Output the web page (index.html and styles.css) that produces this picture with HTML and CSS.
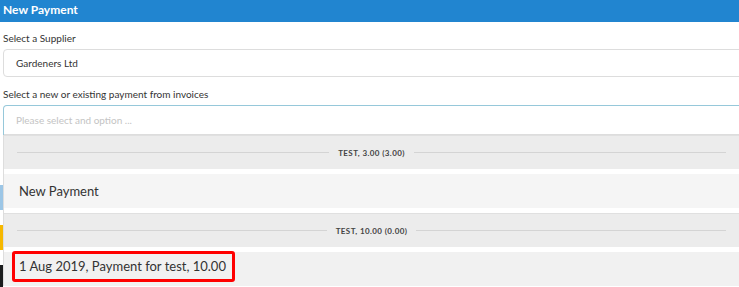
FILE: index.html
```html
<!DOCTYPE html>
<html lang="en">
<head>
  <meta charset="UTF-8" />
  <meta name="viewport" content="width=device-width, initial-scale=1.0" />
  <title>New Payment</title>
  <link rel="stylesheet" href="styles.css">
</head>
<body>
  <header class="modal-header">New Payment</header>

  <div class="content">
    <div class="strip">
      <span class="strip-blue"></span>
      <span class="strip-yellow"></span>
      <span class="strip-dark"></span>
    </div>

    <section class="form">
      <label class="field-label">Select a Supplier</label>
      <div class="input">Gardeners Ltd</div>

      <label class="field-label">Select a new or existing payment from invoices</label>
      <div class="dropdown">
        <div class="search">Please select and option ...</div>
        <div class="menu">
          <div class="divider"><span>TEST, 3.00 (3.00)</span></div>
          <div class="item">New Payment</div>
          <div class="divider"><span>TEST, 10.00 (0.00)</span></div>
          <div class="item item-active"><span class="highlight">1 Aug 2019, Payment for test, 10.00</span></div>
        </div>
      </div>
    </section>
  </div>
</body>
</html>
```

FILE: styles.css
```css
body {
  font-family: Lato, 'Open Sans', sans-serif;
  margin: 0;
  color: #333;
  width: 739px;
  height: 287px;
  overflow: hidden;
  background: #fff;
}

.modal-header {
  background: #2185d0;
  color: #fff;
  font-weight: bold;
  font-size: 12px;
  height: 22px;
  line-height: 20px;
  padding-left: 3px;
}

.content {
  display: flex;
}

.strip {
  width: 3px;
  flex-shrink: 0;
  display: flex;
  flex-direction: column;
}

.strip span {
  display: block;
  height: 25px;
}

.strip-blue {
  margin-top: 163px;
  background: #9cc6e6;
}

.strip-yellow {
  margin-top: 15px;
  background: #f6b800;
}

.strip-dark {
  margin-top: 15px;
  background: #1b1c1d;
}

.form {
  flex: 1;
  margin-right: -6px;
}

.field-label {
  display: block;
  font-size: 10px;
  line-height: 12px;
  padding-top: 10px;
  margin-bottom: 5px;
}

.input {
  height: 26px;
  line-height: 26px;
  border: 1px solid #ddd;
  border-radius: 4px;
  font-size: 10px;
  padding-left: 12px;
}

.input + .field-label {
  padding-top: 11px;
}

.dropdown {
  border: 1px solid #96c8da;
  border-radius: 4px 4px 0 0;
  border-bottom: none;
}

.search {
  height: 28px;
  line-height: 28px;
  font-size: 10px;
  color: #c4c4c4;
  padding-left: 12px;
  border-bottom: 1px solid #ddd;
}

.menu {
  margin-left: -1px;
  border-left: 1px solid #ddd;
  background: #fff;
}

.divider {
  display: flex;
  align-items: center;
  gap: 9px;
  height: 33px;
  border-top: 1px solid #e0e0e0;
  background: #ececec;
  padding: 0 18px 0 13px;
  font-size: 8px;
  font-weight: bold;
  letter-spacing: 0.4px;
  color: #444;
  margin-bottom: 5px;
}

.divider::before,
.divider::after {
  content: "";
  flex: 1;
  border-top: 1px solid #d4d4d4;
}

.item {
  height: 34px;
  line-height: 34px;
  background: #f5f5f5;
  padding-left: 15px;
  font-size: 13px;
  margin-bottom: 5px;
}

.item-active {
  background: #f1f1f1;
}

.highlight {
  display: inline-block;
  border: 3px solid #f00;
  border-radius: 3px;
  line-height: 17px;
  padding: 4px 6px 4px 4px;
  margin-left: -7px;
  color: #333;
  vertical-align: top;
  margin-top: -1px;
}
```
